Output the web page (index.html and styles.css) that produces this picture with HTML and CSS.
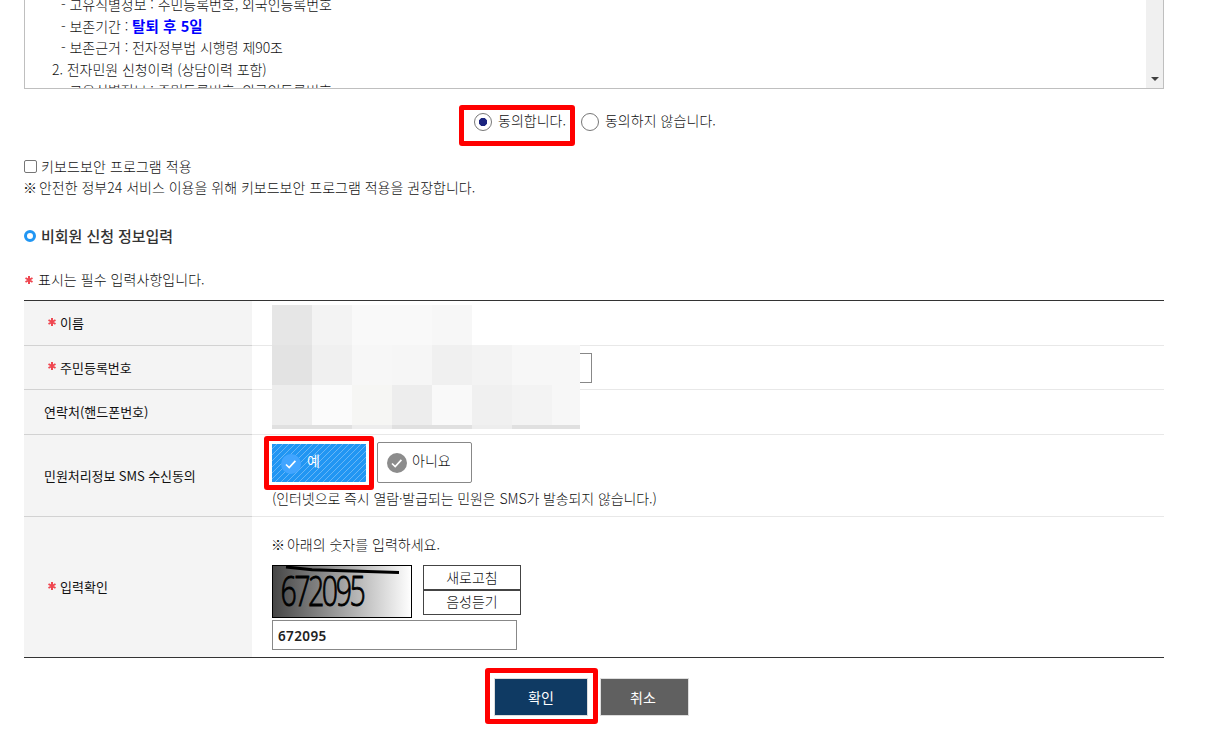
FILE: index.html
```html
<!DOCTYPE html>
<html lang="ko">
<head>
<meta charset="utf-8">
<title>비회원 신청</title>
<link rel="stylesheet" href="styles.css">
</head>
<body>
<main class="page">
  <section class="terms">
    <div class="terms-text">
      <p class="sub">- 고유식별정보 : 주민등록번호, 외국인등록번호</p>
      <p class="sub">- 보존기간 : <b class="period">탈퇴 후 5일</b></p>
      <p class="sub">- 보존근거 : 전자정부법 시행령 제90조</p>
      <p class="item">2. 전자민원 신청이력 (상담이력 포함)</p>
      <p class="sub">- 고유식별정보 : 주민등록번호, 외국인등록번호</p>
    </div>
    <div class="scrollbar"><svg width="8" height="4" viewBox="0 0 8 4"><path d="M0 0h8L4 4z" fill="#404040"/></svg></div>
  </section>

  <div class="agree">
    <label class="choice marked mark-agree"><span class="radio on"></span><span>동의합니다.</span></label>
    <label class="choice refuse"><span class="radio"></span><span>동의하지 않습니다.</span></label>
  </div>

  <div class="security">
    <label class="check-line"><span class="checkbox"></span><span>키보드보안 프로그램 적용</span></label>
    <p class="notice"><span class="mark">※</span> 안전한 정부24 서비스 이용을 위해 키보드보안 프로그램 적용을 권장합니다.</p>
  </div>

  <h2 class="heading"><span class="ring"></span>비회원 신청 정보입력</h2>
  <p class="required-note"><svg class="star" viewBox="0 0 8 8"><path d="M4 0v8M.5 2l7 4M.5 6l7-4"/></svg>표시는 필수 입력사항입니다.</p>

  <section class="form">
    <div class="row name-row"><div class="th"><svg class="star" viewBox="0 0 8 8"><path d="M4 0v8M.5 2l7 4M.5 6l7-4"/></svg>이름</div><div class="td"></div></div>
    <div class="row id-row"><div class="th"><svg class="star" viewBox="0 0 8 8"><path d="M4 0v8M.5 2l7 4M.5 6l7-4"/></svg>주민등록번호</div><div class="td"><span class="id-input"></span></div></div>
    <div class="row phone-row"><div class="th">연락처(핸드폰번호)</div><div class="td"></div></div>
    <div class="row sms-row"><div class="th">민원처리정보 SMS 수신동의</div>
      <div class="td sms">
        <div class="options">
          <div class="marked mark-yes">
            <div class="option yes"><svg class="tick" viewBox="0 0 20 20"><circle cx="10" cy="10" r="10" fill="#42a5ff"/><path d="M5 10.5l3.2 3 6.2-6.7"/></svg><span>예</span></div>
          </div>
          <div class="option no"><svg class="tick" viewBox="0 0 20 20"><circle cx="10" cy="10" r="10" fill="#8c8c8c"/><path d="M5 10.5l3.2 3 6.2-6.7"/></svg><span>아니요</span></div>
        </div>
        <p class="sms-note">(인터넷으로 즉시 열람·발급되는 민원은 SMS가 발송되지 않습니다.)</p>
      </div>
    </div>
    <div class="row captcha-row"><div class="th"><svg class="star" viewBox="0 0 8 8"><path d="M4 0v8M.5 2l7 4M.5 6l7-4"/></svg>입력확인</div>
      <div class="td captcha">
        <p class="captcha-note"><span class="mark">※</span> 아래의 숫자를 입력하세요.</p>
        <div class="captcha-line">
          <svg class="captcha-image" width="140" height="53" viewBox="0 0 140 53">
            <defs><linearGradient id="shade"><stop offset="0" stop-color="#454545"/><stop offset="1" stop-color="#fff"/></linearGradient></defs>
            <rect x=".5" y=".5" width="139" height="52" fill="url(#shade)" stroke="#000"/>
            <path d="M14 2L40 4.800L127 7.500" fill="none" stroke="#000" stroke-width="3"/>
            <text class="digits" transform="translate(8.500 40.500) scale(.68 1)">672095</text>
          </svg>
          <div class="captcha-buttons"><span>새로고침</span><span>음성듣기</span></div>
        </div>
        <div class="captcha-input">672095</div>
      </div>
    </div>
    <div class="mosaic">
      <i class="a"></i><i class="d"></i><i class="g"></i><i class="g"></i><i class="f"></i><i></i><i></i><i></i>
      <i class="a2"></i><i class="c"></i><i class="f"></i><i class="e"></i><i class="c"></i><i class="d"></i><i class="f"></i><i class="f"></i>
      <i class="b"></i><i class="h"></i><i class="w"></i><i class="b"></i><i class="g"></i><i class="c"></i><i class="d"></i><i class="f"></i>
      <i class="k"></i><i class="k"></i><i class="b"></i><i class="k"></i><i class="k"></i><i class="b"></i><i class="k"></i><i class="k"></i>
    </div>
  </section>

  <div class="actions">
    <div class="marked mark-ok"><span class="button ok">확인</span></div>
    <span class="button cancel">취소</span>
  </div>
</main>
</body>
</html>
```
FILE: styles.css
```css
*, *::after { box-sizing: border-box; }
body, p, h2 { margin: 0; }
body {
  height: 739px;
  overflow: hidden;
  background: #fff;
  color: #111;
  font: 300 14px/21.500px "Noto Sans CJK KR", sans-serif;
}
.page { width: 1140px; margin-left: 24px; }
p, span, .th, .heading { white-space: nowrap; }

.terms {
  display: flex;
  justify-content: space-between;
  height: 89px;
  overflow: hidden;
  border: 1px solid #bfbfbf;
  border-top: 0;
}
.terms-text { margin-top: -6px; letter-spacing: -.05px; }
.sub { padding-left: 36px; }
.item { padding-left: 27px; }
.period { color: #00f; font-size: 14.500px; line-height: 1; font-weight: 700; letter-spacing: .1px; }
.scrollbar {
  display: flex;
  align-items: flex-end;
  justify-content: center;
  width: 17px;
  padding-bottom: 7px;
  background: #f0f0f0;
}

.agree { display: flex; height: 60px; padding: 21px 0 0 450px; gap: 15px; }
.choice { display: flex; align-items: center; gap: 6px; height: 22px; }
.refuse { letter-spacing: .05px; }
.radio { width: 18px; height: 18px; margin-top: 2px; border: 1px solid #777; border-radius: 50%; }
.radio.on { background: radial-gradient(circle, #1a237e 3.800px, #fff 4.500px); }

/* Red highlight frames lie over the controls they point at */
.marked { position: relative; }
.marked::after { content: ""; position: absolute; border: 5px solid #f00; border-radius: 3px; }
.mark-agree::after { left: -15px; top: -5px; width: 116px; height: 41px; }
.mark-yes::after { left: -8px; top: -6px; width: 110px; height: 54px; }
.mark-ok::after { left: -9px; top: -10px; width: 113px; height: 56px; }

.security { height: 76px; padding-top: 7px; }
.check-line { display: flex; align-items: center; gap: 4px; letter-spacing: .1px; }
.notice { margin-top: -1px; }
.notice, .captcha-note { letter-spacing: 0; }
.mark { margin: 0 -2px 0 -1px; }
.checkbox { width: 13px; height: 13px; border: 1px solid #767676; border-radius: 2px; }
.heading { display: flex; align-items: center; gap: 5px; height: 22px; color: #333; font-size: 15px; font-weight: 500; letter-spacing: -.05px; }
.ring { width: 12px; height: 12px; border: 3px solid #2196f3; border-radius: 50%; }
.required-note { display: flex; align-items: center; gap: 5px; height: 53px; padding: 12px 0 0 1px; letter-spacing: .05px; }
.star { flex: none; width: 8px; height: 8px; fill: none; stroke: #ef4751; stroke-width: 2; }

.form { position: relative; height: 358px; border-top: 1px solid #333; border-bottom: 1px solid #333; }
.row { display: grid; grid-template-columns: 228px 1fr; }
.name-row { height: 45px; }
.id-row { height: 44px; }
.phone-row { height: 45px; }
.sms-row { height: 82px; }
.captcha-row { height: 140px; }
.th {
  display: flex;
  align-items: center;
  gap: 4px;
  padding-left: 20px;
  background: #f4f4f4;
  border-bottom: 1px solid #d2d2d2;
  color: #111;
  font-size: 13px;
  font-weight: 400;
}
.th .star { margin: 0 0 3px 4px; }
.sms-row .th { letter-spacing: -.08px; }
.td { padding-left: 20px; border-bottom: 1px solid #e8e8e8; }
.captcha-row > * { border-bottom: 0; }
.id-input { display: block; width: 320px; height: 30px; margin-top: 7px; border: 1px solid #888; }
.options { display: flex; gap: 10px; padding-top: 7px; }
.option { display: flex; align-items: center; padding-left: 9px; gap: 5px; width: 95px; height: 41px; }
.option span { margin-top: -4px; }
.tick { width: 20px; height: 20px; margin-top: 1px; }
.tick path { fill: none; stroke: #fff; stroke-width: 1.700; }
.yes {
  width: 94px;
  height: 38px;
  margin-top: 2px;
  gap: 6px;
  color: #fff;
  font-weight: 400;
  background: repeating-linear-gradient(135deg, #2196f3 0 3.300px, #7cc0f8 3.600px 3.900px, #2196f3 4.243px);
}
.mark-yes { width: 95px; }
.no { border: 1px solid #888; border-radius: 2px; }
.sms-note { margin-top: 5px; letter-spacing: -.1px; }
.captcha { padding-top: 17px; }
.captcha-line { display: flex; gap: 11px; margin-top: 9px; }
.captcha-image { display: block; }
.digits { font: 300 42px "Open Sans", sans-serif; letter-spacing: -3.700px; stroke: #000; stroke-width: .9px; }
.captcha-buttons { width: 98px; height: 50px; border: 1px solid #444; }
.captcha-buttons span { display: block; height: 23px; line-height: 23px; text-align: center; }
.captcha-buttons span + span { height: 25px; line-height: 21px; border-top: 2px solid #444; }
.captcha-input {
  width: 245px;
  height: 30px;
  margin-top: 2px;
  padding-left: 5px;
  border: 1px solid #888;
  color: #222;
  font: 600 13.500px/31px "Noto Sans", sans-serif;
  letter-spacing: .4px;
}

/* Blocked-out personal data over the first three rows */
.mosaic {
  position: absolute;
  left: 248px;
  top: 4px;
  display: grid;
  grid-template-columns: repeat(7, 40px) 28px;
  grid-template-rows: 40px 40px 40px 4px;
}
.a { background: #e6e6e6; }
.a2 { background: #e3e3e3; }
.b { background: #ededed; }
.c { background: #f0f0f0; }
.d { background: #f3f3f3; }
.e { background: #f6f6f6; }
.f { background: #f7f7f7; }
.g { background: #f9f9f9; }
.h { background: #fbfbfb; }
.w { background: #f6f6f4; }
.k { background: #e0e0e0; }

.actions { display: flex; gap: 12px; padding: 20px 0 0 470px; }
.button {
  display: block;
  height: 38px;
  border: 1px solid #ddd;
  color: #fff;
  font-weight: 400;
  line-height: 36px;
  text-align: center;
}
.ok { width: 94px; background: #0f3a63; }
.cancel { width: 89px; padding-right: 3px; background: #606060; }
```
